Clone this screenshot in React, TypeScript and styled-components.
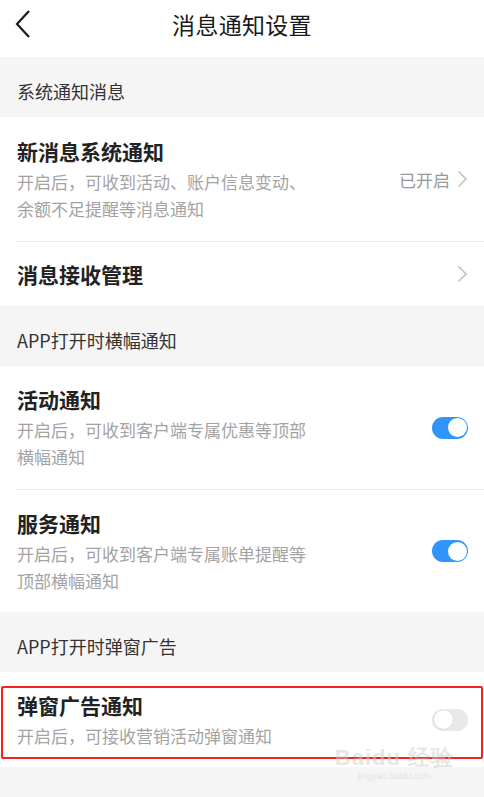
import React from "react";
import styled, { createGlobalStyle } from "styled-components";

const Global = createGlobalStyle`
  html, body { margin: 0; padding: 0; background: #f5f5f5; }
  body { font-family: "Noto Sans CJK SC", "Noto Sans", sans-serif; }
  * { box-sizing: border-box; }
`;

const Page = styled.div`
  position: relative;
  width: 484px;
  min-height: 797px;
  background: #f5f5f5;
  overflow: hidden;
`;

const Header = styled.header`
  height: 57px;
  background: #fff;
  display: flex;
  align-items: center;
  justify-content: center;
  padding-bottom: 9px;
  position: relative;
`;

const BackButton = styled.div`
  position: absolute;
  left: 14px;
  top: 9px;
  width: 20px;
  height: 30px;
  display: flex;
  align-items: center;
`;

const HeaderTitle = styled.h1`
  margin: 0;
  font-size: 23px;
  font-weight: 400;
  color: #1a1a1a;
  letter-spacing: 0.3px;
`;

const SectionLabel = styled.div`
  height: 60px;
  display: flex;
  align-items: center;
  padding-left: 17px;
  padding-top: 7px;
  font-size: 18px;
  color: #333;
`;

const Card = styled.div`
  background: #fff;
  padding-left: 17px;
`;

const Row = styled.div<{ $h: number }>`
  height: ${(p) => p.$h}px;
  display: flex;
  align-items: center;
  padding-right: 16px;
  position: relative;
  & + & {
    border-top: 1px solid #ececec;
  }
`;

const Outline = styled.div`
  position: absolute;
  left: -16px;
  right: 1px;
  top: 14px;
  bottom: 8px;
  border: 2px solid #f5221b;
  border-radius: 2px;
  pointer-events: none;
`;

const TextCol = styled.div`
  flex: 1;
  display: flex;
  flex-direction: column;
`;

const Title = styled.div`
  font-size: 21px;
  font-weight: 700;
  color: #222;
  line-height: 28px;
`;

const Desc = styled.div`
  margin-top: 3px;
  font-size: 17px;
  color: #a3a3a3;
  line-height: 27px;
  max-width: 300px;
`;

const Status = styled.span`
  font-size: 17px;
  color: #999;
  margin-right: 7px;
`;

const Chevron = () => (
  <svg width="11" height="18" viewBox="0 0 11 18">
    <path d="M1.5 1.5 L9 9 L1.5 16.5" fill="none" stroke="#c2c2c2" strokeWidth="1.6" />
  </svg>
);

const Toggle = styled.div<{ $on: boolean }>`
  width: 36px;
  height: 22px;
  border-radius: 11px;
  background: ${(p) => (p.$on ? "#2f95fc" : "#e8e8e8")};
  position: relative;
  &::after {
    content: "";
    position: absolute;
    top: 1.5px;
    left: ${(p) => (p.$on ? "15.5px" : "1.5px")};
    width: 19px;
    height: 19px;
    border-radius: 50%;
    background: #fff;
    box-shadow: ${(p) => (p.$on ? "none" : "0 0 1px rgba(0,0,0,0.2)")};
  }
`;

const Tail = styled.div`
  height: 28px;
`;

const Watermark = styled.div`
  position: absolute;
  right: 30px;
  bottom: 16px;
  display: flex;
  flex-direction: column;
  align-items: center;
  gap: 2px;
  color: rgba(205, 205, 205, 0.5);
  font-family: "Liberation Sans", sans-serif;
  pointer-events: none;
`;

const WmTop = styled.div`
  font-size: 22px;
  font-weight: 700;
  letter-spacing: 1px;
  line-height: 22px;
`;

const WmBottom = styled.div`
  font-size: 9px;
  line-height: 10px;
`;

export default function App() {
  return (
    <Page>
      <Global />
      <Header>
        <BackButton>
          <svg width="18" height="30" viewBox="0 0 18 30">
            <path d="M15 2 L3 15 L15 28" fill="none" stroke="#1a1a1a" strokeWidth="2.2" />
          </svg>
        </BackButton>
        <HeaderTitle>消息通知设置</HeaderTitle>
      </Header>

      <SectionLabel>系统通知消息</SectionLabel>
      <Card>
        <Row $h={124}>
          <TextCol>
            <Title>新消息系统通知</Title>
            <Desc>开启后，可收到活动、账户信息变动、余额不足提醒等消息通知</Desc>
          </TextCol>
          <Status>已开启</Status>
          <Chevron />
        </Row>
        <Row $h={65}>
          <TextCol>
            <Title>消息接收管理</Title>
          </TextCol>
          <Chevron />
        </Row>
      </Card>

      <SectionLabel>APP打开时横幅通知</SectionLabel>
      <Card>
        <Row $h={123}>
          <TextCol>
            <Title>活动通知</Title>
            <Desc>开启后，可收到客户端专属优惠等顶部横幅通知</Desc>
          </TextCol>
          <Toggle $on />
        </Row>
        <Row $h={123}>
          <TextCol>
            <Title>服务通知</Title>
            <Desc>开启后，可收到客户端专属账单提醒等顶部横幅通知</Desc>
          </TextCol>
          <Toggle $on />
        </Row>
      </Card>

      <SectionLabel>APP打开时弹窗广告</SectionLabel>
      <Card>
        <Row $h={95}>
          <Outline />
          <TextCol>
            <Title>弹窗广告通知</Title>
            <Desc>开启后，可接收营销活动弹窗通知</Desc>
          </TextCol>
          <Toggle $on={false} />
        </Row>
      </Card>
      <Tail />

      <Watermark>
        <WmTop>Baidu 经验</WmTop>
        <WmBottom>jingyan.baidu.com</WmBottom>
      </Watermark>
    </Page>
  );
}
